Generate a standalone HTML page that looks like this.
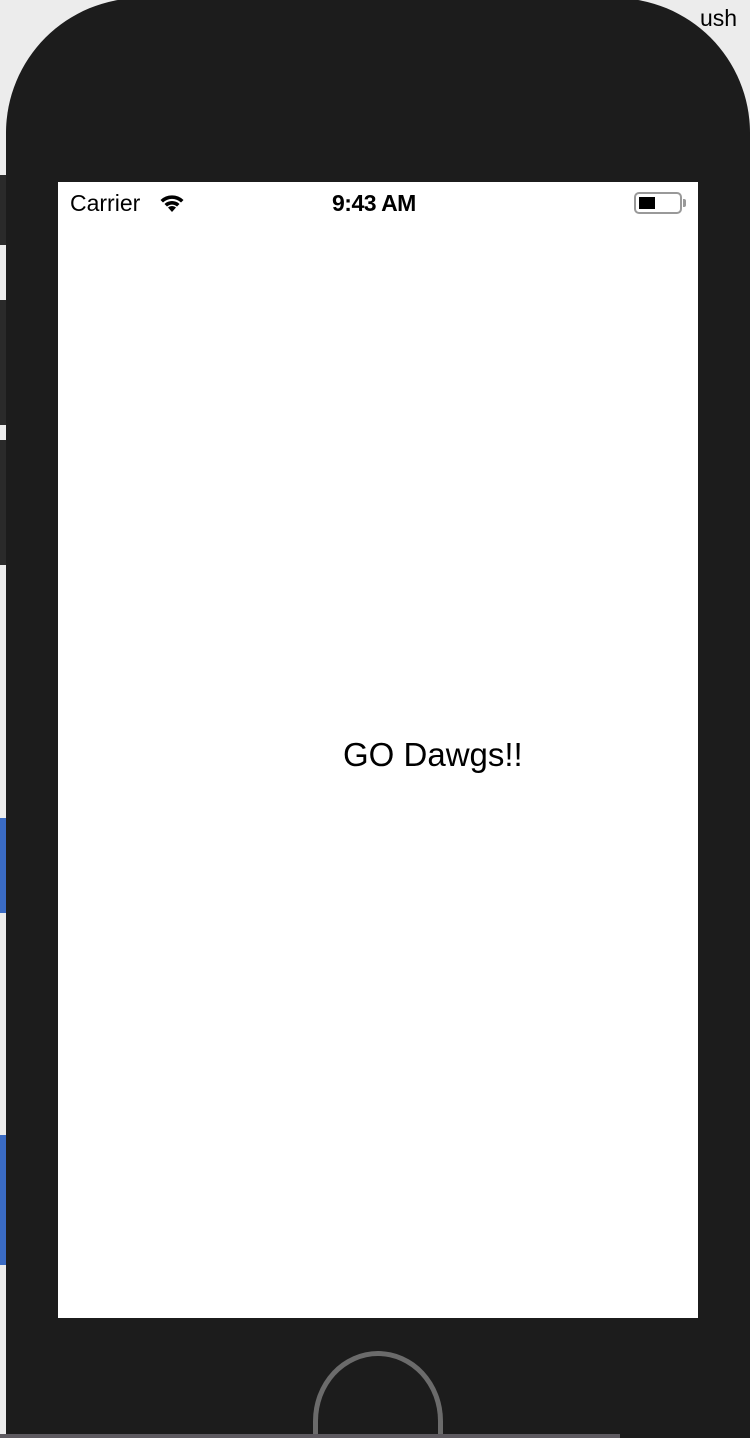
<!DOCTYPE html>
<html><head><style>
html,body{margin:0;padding:0;width:750px;height:1438px;overflow:hidden}
body{background:#ececec;position:relative;font-family:"Liberation Sans",sans-serif}
.wrap{position:absolute;left:0;top:0;width:750px;height:1438px;overflow:hidden}
.strip{position:absolute;left:0;width:8px}
.phone{position:absolute;left:6px;top:-2px;width:744px;height:1440px;background:#1c1c1c;border-radius:135px 135px 0 0}
.screen{position:absolute;left:58px;top:182px;width:640px;height:1136px;background:#fff}
.sb{position:absolute;top:0;left:0;right:0;height:42px;font-size:23px;color:#000}
.home{position:absolute;left:313px;top:1351px;width:130px;height:87px;border:5px solid #6b6b6b;border-bottom:none;border-radius:65px 65px 0 0/70px 70px 0 0;box-sizing:border-box}
.bot{position:absolute;left:0;top:1434px;width:620px;height:4px;background:#5e5a60}
</style></head><body><div class="wrap">
<div class="strip" style="top:175px;height:70px;background:#2a2a2a"></div>
<div class="strip" style="top:300px;height:125px;background:#2a2a2a"></div>
<div class="strip" style="top:440px;height:125px;background:#2a2a2a"></div>
<div class="strip" style="top:818px;height:95px;background:#3a6bc4"></div>
<div class="strip" style="top:1135px;height:130px;background:#3a6bc4"></div>
<div style="position:absolute;left:700px;top:5px;font-size:23px;color:#000">ush</div>
<div class="phone"></div>
<div class="screen">
 <div class="sb">
  <span style="position:absolute;left:12px;top:8px">Carrier</span>
  <svg style="position:absolute;left:99px;top:10px" width="30" height="22" viewBox="0 0 28 22"><path d="M14 20 L10 15.5 A6 6 0 0 1 18 15.5 Z" fill="#000"/><path d="M6.5 12 A11 11 0 0 1 21.5 12 L19 14.5 A7.5 7.5 0 0 0 9 14.5 Z" fill="#000"/><path d="M2.5 8 A16.5 16.5 0 0 1 25.5 8 L23 10.5 A13 13 0 0 0 5 10.5 Z" fill="#000"/></svg>
  <span style="position:absolute;left:274px;top:8px;font-weight:bold;letter-spacing:-0.5px">9:43 AM</span>
  <div style="position:absolute;left:576px;top:10px;width:48px;height:22px;border:2px solid #999;border-radius:5px;box-sizing:border-box"><div style="position:absolute;left:3px;top:3px;width:16px;height:12px;background:#000"></div></div>
  <div style="position:absolute;left:625px;top:17px;width:3px;height:8px;background:#999;border-radius:0 2px 2px 0"></div>
 </div>
 <div style="position:absolute;left:285px;top:554px;font-size:33px;color:#000">GO Dawgs!!</div>
</div>
<div class="home"></div>
<div class="bot"></div>
</div></body></html>
